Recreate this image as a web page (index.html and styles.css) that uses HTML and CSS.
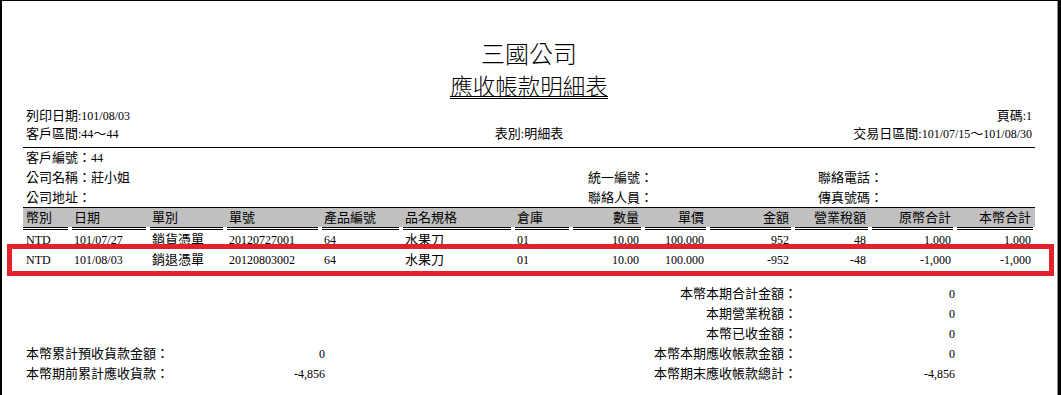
FILE: index.html
```html
<!DOCTYPE html>
<html lang="zh-Hant">
<head>
<meta charset="utf-8">
<title>應收帳款明細表</title>
<link rel="stylesheet" href="styles.css">
</head>
<body>
<div class="page">
  <header class="report-head">
    <h1 class="company">三國公司</h1>
    <h2 class="title"><span>應收帳款明細表</span></h2>
  </header>

  <div class="meta">
    <div class="meta-row">
      <span><span class="zh">列印日期</span>:101/08/03</span>
      <span></span>
      <span class="r"><span class="zh">頁碼</span>:1</span>
    </div>
    <div class="meta-row">
      <span><span class="zh">客戶區間</span>:44<span class="zh">～</span>44</span>
      <span class="c"><span class="zh">表別</span>:<span class="zh">明細表</span></span>
      <span class="r"><span class="zh">交易日區間</span>:101/07/15<span class="zh">～</span>101/08/30</span>
    </div>
  </div>

  <div class="customer">
    <span><span class="zh">客戶編號：</span>44</span>
    <span></span><span></span><span></span><span></span>
    <span class="zh">公司名稱：莊小姐</span>
    <span class="zh lbl">統一編號：</span>
    <span></span>
    <span class="zh lbl">聯絡電話：</span>
    <span></span>
    <span class="zh">公司地址：</span>
    <span class="zh lbl">聯絡人員：</span>
    <span></span>
    <span class="zh lbl">傳真號碼：</span>
    <span></span>
  </div>

  <div class="table-wrap">
    <table class="detail">
      <colgroup>
        <col class="w49"><col class="w78"><col class="w77"><col class="w95"><col class="w81"><col class="w112"><col class="w58"><col class="w72"><col class="w65"><col class="w85"><col class="w77"><col class="w85"><col class="w78">
      </colgroup>
      <thead>
        <tr>
          <th><span>幣別</span></th>
          <th><span>日期</span></th>
          <th><span>單別</span></th>
          <th><span>單號</span></th>
          <th><span>產品編號</span></th>
          <th><span>品名規格</span></th>
          <th><span>倉庫</span></th>
          <th class="n"><span>數量</span></th>
          <th class="n"><span>單價</span></th>
          <th class="n"><span>金額</span></th>
          <th class="n"><span>營業稅額</span></th>
          <th class="n"><span>原幣合計</span></th>
          <th class="n last"><span>本幣合計</span></th>
        </tr>
      </thead>
      <tbody>
        <tr>
          <td>NTD</td>
          <td>101/07/27</td>
          <td class="zh">銷貨憑單</td>
          <td>20120727001</td>
          <td>64</td>
          <td class="zh">水果刀</td>
          <td>01</td>
          <td class="n">10.00</td>
          <td class="n">100.000</td>
          <td class="n">952</td>
          <td class="n">48</td>
          <td class="n">1,000</td>
          <td class="n last">1,000</td>
        </tr>
        <tr>
          <td>NTD</td>
          <td>101/08/03</td>
          <td class="zh">銷退憑單</td>
          <td>20120803002</td>
          <td>64</td>
          <td class="zh">水果刀</td>
          <td>01</td>
          <td class="n">10.00</td>
          <td class="n">100.000</td>
          <td class="n">-952</td>
          <td class="n">-48</td>
          <td class="n">-1,000</td>
          <td class="n last">-1,000</td>
        </tr>
      </tbody>
    </table>
    <div class="highlight"></div>
  </div>

  <div class="summary">
    <span></span><span></span><span></span>
    <span class="zh lbl">本幣本期合計金額：</span><span class="val">0</span>
    <span></span><span></span><span></span>
    <span class="zh lbl">本期營業稅額：</span><span class="val">0</span>
    <span></span><span></span><span></span>
    <span class="zh lbl">本幣已收金額：</span><span class="val">0</span>
    <span class="zh">本幣累計預收貨款金額：</span><span class="val">0</span><span></span>
    <span class="zh lbl">本幣本期應收帳款金額：</span><span class="val">0</span>
    <span class="zh">本幣期前累計應收貨款：</span><span class="val">-4,856</span><span></span>
    <span class="zh lbl">本幣期末應收帳款總計：</span><span class="val">-4,856</span>
  </div>
</div>
</body>
</html>
```

FILE: styles.css
```css
* { box-sizing: border-box; }

html, body {
  margin: 0;
  padding: 0;
  background: #fff;
}

body {
  font-family: "Liberation Serif", "Noto Sans CJK TC", serif;
  font-size: 12px;
  color: #000;
}

.page {
  width: 1061px;
  height: 395px;
  overflow: hidden;
  border-top: 1px solid #000;
  border-left: 2px solid #000;
  border-right: 3px solid #000;
  box-shadow: inset -1px 0 0 #8a8a8a;
  padding: 38px 23px 0 21px;
}

.zh {
  font-size: 13px;
}

/* ---------- heading ---------- */
.report-head {
  display: flex;
  flex-direction: column;
  align-items: center;
}

.company {
  margin: 0;
  font-family: "Noto Sans CJK TC", sans-serif;
  font-weight: 300;
  font-size: 24px;
  line-height: 28px;
}

.title {
  margin: 7px 0 0;
  font-family: "Noto Sans CJK TC", sans-serif;
  font-weight: 300;
  font-size: 22.5px;
  display: flex;
  justify-content: center;
}

.title span {
  display: block;
  line-height: 22px;
  border-bottom: 3px double #000;
}

/* ---------- meta ---------- */
.meta {
  margin-top: 8px;
  border-bottom: 1px solid #000;
  padding-bottom: 4px;
}

.meta-row {
  display: grid;
  grid-template-columns: 1fr 1fr 1fr;
  line-height: 18px;
  padding: 0 3px;
}

.meta-row .c { text-align: center; }
.meta-row .r { text-align: right; }

/* ---------- customer ---------- */
.customer {
  display: grid;
  grid-template-columns: 562px 65px 165px 65px 1fr;
  grid-template-rows: 20px 20px 19px;
  line-height: 20px;
  padding-left: 3px;
}

.customer .lbl { text-align: right; }

/* ---------- detail table ---------- */
.table-wrap {
  position: relative;
}

.detail {
  width: 1012px;
  table-layout: fixed;
  border-collapse: collapse;
  border-top: 1px solid #000;
}

.w49 { width: 49px; }
.w58 { width: 58px; }
.w65 { width: 65px; }
.w72 { width: 72px; }
.w77 { width: 77px; }
.w78 { width: 78px; }
.w81 { width: 81px; }
.w85 { width: 85px; }
.w95 { width: 95px; }
.w112 { width: 112px; }

.detail th {
  padding: 0;
  font-weight: normal;
  font-size: 13px;
  text-align: left;
  background: linear-gradient(#c0c0c0, #c0c0c0) no-repeat left top / 100% 19px;
}

.detail th span {
  display: block;
  height: 22px;
  line-height: 19px;
  padding: 0 2px;
  margin-right: 4px;
  border-bottom: 3px double #000;
  white-space: nowrap;
}

.detail th:first-child span { padding-left: 3px; }
.detail th.n { text-align: right; }
.detail th.last span { margin-right: 2px; }

.detail td {
  height: 20px;
  line-height: 20px;
  padding: 0 6px 0 2px;
  white-space: nowrap;
}

.detail td:first-child { padding-left: 3px; }
.detail td.n { text-align: right; }
.detail td.last { padding-right: 4px; }

.highlight {
  position: absolute;
  left: -16px;
  top: 37px;
  width: 1047px;
  height: 32px;
  border: 5px solid #e2222a;
  pointer-events: none;
}

/* ---------- summary ---------- */
.summary {
  margin-top: 14px;
  display: grid;
  grid-template-columns: 174px 125px 272px 200px 158px;
  grid-auto-rows: 20px;
  line-height: 20px;
  padding-left: 3px;
}

.summary .lbl,
.summary .val { text-align: right; }
```
